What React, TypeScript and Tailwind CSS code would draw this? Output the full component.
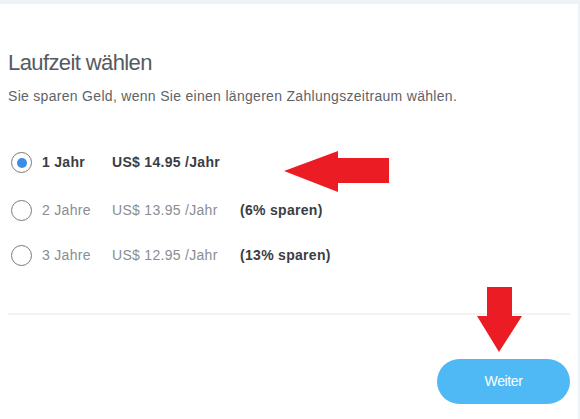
import React from "react";

const plans = [
  { label: "1 Jahr", price: "US$ 14.95 /Jahr", save: "", active: true },
  { label: "2 Jahre", price: "US$ 13.95 /Jahr", save: "(6% sparen)", active: false },
  { label: "3 Jahre", price: "US$ 12.95 /Jahr", save: "(13% sparen)", active: false },
];

function Radio({ checked }: { checked: boolean }) {
  return (
    <span className="flex h-[21px] w-[21px] shrink-0 items-center justify-center rounded-full border-[1.5px] border-[#7a7a7a] bg-white">
      {checked && <span className="h-[10px] w-[10px] rounded-full bg-[#3a8ee6]" />}
    </span>
  );
}

function LeftArrow() {
  return (
    <svg className="absolute left-[283px] top-[146px]" width="108" height="44" viewBox="0 0 108 44">
      <polygon points="1,21 55,1 55,8 106,8 106,33 55,33 55,42" fill="#ec1c24" />
    </svg>
  );
}

function DownArrow() {
  return (
    <svg className="absolute left-[476px] top-[282px]" width="48" height="68" viewBox="0 0 48 68">
      <polygon points="11,1 36,1 36,30 46,30 23,66 1,30 11,30" fill="#ec1c24" />
    </svg>
  );
}

export default function App() {
  return (
    <div className="relative h-[419px] w-[580px] overflow-hidden border-t-4 border-r-2 border-[#eff2f5] bg-white font-['Liberation_Sans',Arial,sans-serif]">
      <div className="flex flex-col pl-2 pr-[8px]">
        <h1 className="mt-[44px] text-[22px] leading-[30px] tracking-[-0.6px] text-[#555a60]">Laufzeit wählen</h1>
        <p className="mt-[10px] text-[14px] leading-[16px] tracking-[0.3px] text-[#5f6368]">
          Sie sparen Geld, wenn Sie einen längeren Zahlungszeitraum wählen.
        </p>

        <div className="mt-[48px] flex flex-col pl-[3px]">
          {plans.map((p, i) => (
            <div
              key={p.label}
              className={`flex h-[21px] items-center text-[14px] tracking-[0.3px] ${i === 1 ? "mt-[27px]" : i === 2 ? "mt-[24px]" : ""}`}
            >
              <Radio checked={p.active} />
              <span className={`ml-[10px] w-[70px] ${p.active ? "font-bold text-[#3a3d42]" : "text-[#8a8d91]"}`}>{p.label}</span>
              <span className={`w-[128px] ${p.active ? "font-bold text-[#3a3d42]" : "text-[#8a8d91]"}`}>{p.price}</span>
              {p.save && <span className="font-bold text-[#3a3d42]">{p.save}</span>}
            </div>
          ))}
        </div>

        <div className="mt-[47px] h-[2px] w-[562px] bg-[#f2f2f2]" />

        <div className="mt-[44px] flex justify-end">
          <button className="h-[45px] w-[133px] rounded-full bg-[#4fb9f5] text-[14px] tracking-[-0.4px] text-white">
            Weiter
          </button>
        </div>
      </div>
      <LeftArrow />
      <DownArrow />
    </div>
  );
}
